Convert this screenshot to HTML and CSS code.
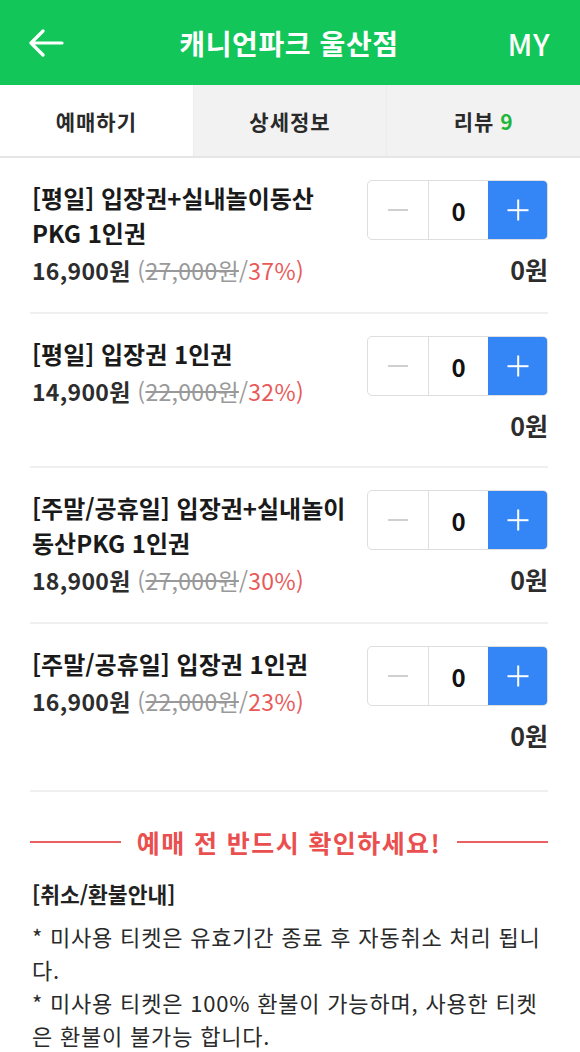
FILE: index.html
```html
<!DOCTYPE html>
<html lang="ko">
<head>
<meta charset="utf-8">
<title>캐니언파크 울산점</title>
<link rel="stylesheet" href="styles.css">
</head>
<body>
<header class="topbar">
  <span class="back" aria-label="뒤로">
    <svg width="36" height="28" viewBox="0 0 36 28"><path d="M34 14H3M15 2L3 14l12 12" fill="none" stroke="#fff" stroke-width="3.2" stroke-linecap="round" stroke-linejoin="round"/></svg>
  </span>
  <h1 class="title">캐니언파크 울산점</h1>
  <span class="my">MY</span>
</header>
<nav class="tabs">
  <div class="tab active">예매하기</div>
  <div class="tab">상세정보</div>
  <div class="tab">리뷰 <span class="count">9</span></div>
</nav>
<main>
  <ul class="items">
    <li class="item">
      <div class="info">
        <div class="name">[평일] 입장권+실내놀이동산 PKG 1인권</div>
        <div class="price"><b>16,900원</b> <span class="orig">(<s>27,000원</s>/</span><span class="rate">37%)</span></div>
      </div>
      <div class="order">
        <div class="stepper"><span class="btn minus"></span><span class="qty">0</span><span class="btn plus"></span></div>
        <div class="sum">0원</div>
      </div>
    </li>
    <li class="item">
      <div class="info">
        <div class="name">[평일] 입장권 1인권</div>
        <div class="price"><b>14,900원</b> <span class="orig">(<s>22,000원</s>/</span><span class="rate">32%)</span></div>
      </div>
      <div class="order">
        <div class="stepper"><span class="btn minus"></span><span class="qty">0</span><span class="btn plus"></span></div>
        <div class="sum">0원</div>
      </div>
    </li>
    <li class="item">
      <div class="info">
        <div class="name">[주말/공휴일] 입장권+실내놀이동산PKG 1인권</div>
        <div class="price"><b>18,900원</b> <span class="orig">(<s>27,000원</s>/</span><span class="rate">30%)</span></div>
      </div>
      <div class="order">
        <div class="stepper"><span class="btn minus"></span><span class="qty">0</span><span class="btn plus"></span></div>
        <div class="sum">0원</div>
      </div>
    </li>
    <li class="item last">
      <div class="info">
        <div class="name">[주말/공휴일] 입장권 1인권</div>
        <div class="price"><b>16,900원</b> <span class="orig">(<s>22,000원</s>/</span><span class="rate">23%)</span></div>
      </div>
      <div class="order">
        <div class="stepper"><span class="btn minus"></span><span class="qty">0</span><span class="btn plus"></span></div>
        <div class="sum">0원</div>
      </div>
    </li>
  </ul>
  <section class="notice">
    <h2 class="notice-title"><span>예매 전 반드시 확인하세요!</span></h2>
    <h3 class="notice-head">[취소/환불안내]</h3>
    <p class="notice-text">* 미사용 티켓은 유효기간 종료 후 자동취소 처리 됩니다.</p>
    <p class="notice-text">* 미사용 티켓은 100% 환불이 가능하며, 사용한 티켓은 환불이 불가능 합니다.</p>
  </section>
</main>
</body>
</html>
```
FILE: styles.css
```css
* { box-sizing: border-box; }
html, body { margin: 0; padding: 0; }
body {
  width: 580px;
  background: #fff;
  color: #222;
  font-family: "Noto Sans CJK KR", "Noto Sans", sans-serif;
}
.topbar {
  height: 85px;
  background: #12c65a;
  display: flex;
  align-items: center;
  justify-content: space-between;
  padding: 0 30px 0 28px;
  color: #fff;
}
.back { display: flex; width: 70px; }
.title {
  margin: 0;
  font-size: 28px;
  font-weight: 700;
  letter-spacing: 0.6px;
}
.my {
  width: 70px;
  text-align: right;
  font-size: 30px;
  font-weight: 500;
  letter-spacing: 0.5px;
}
.tabs {
  display: flex;
  height: 73px;
  border-bottom: 2px solid #e6e6e6;
}
.tab {
  flex: 1;
  display: flex;
  align-items: center;
  justify-content: center;
  background: #f2f2f2;
  font-size: 21px;
  font-weight: 700;
  letter-spacing: 1px;
  color: #2a2a2a;
  border-left: 1px solid #ececec;
}
.tab.active { background: #fff; border-left: none; }
.count { color: #1fb73a; margin-left: 6px; }
.items {
  list-style: none;
  margin: 0;
  padding: 0 32px 0 30px;
}
.item {
  display: flex;
  align-items: flex-start;
  gap: 16px;
  padding: 22px 0 26px 2px;
  border-bottom: 2px solid #efefef;
}
.item.last { padding-bottom: 40px; }
.info { flex: 1; min-width: 0; }
.name {
  font-size: 24px;
  font-weight: 700;
  line-height: 35px;
  color: #1a1a1a;
  letter-spacing: 0;
}
.price {
  margin-top: 4px;
  font-size: 23px;
  line-height: 32px;
  letter-spacing: 0.3px;
}
.price b { color: #2d2d2d; font-weight: 700; }
.orig { color: #999; }
.orig s { text-decoration-thickness: 1.5px; }
.rate { color: #e85a5a; }
.order {
  width: 181px;
  display: flex;
  flex-direction: column;
  align-items: flex-end;
}
.stepper {
  width: 181px;
  height: 60px;
  display: flex;
  border: 1px solid #dedede;
  border-radius: 5px;
  overflow: hidden;
}
.btn, .qty {
  flex: 1;
  position: relative;
  display: flex;
  align-items: center;
  justify-content: center;
}
.qty {
  border-left: 1px solid #dedede;
  font-size: 24px;
  font-weight: 700;
  color: #111;
}
.btn.minus::before {
  content: "";
  width: 20px;
  height: 1.5px;
  background: #d0d0d0;
}
.btn.plus { background: #3486f6; margin: -1px -1px -1px 0; }
.btn.plus::before, .btn.plus::after {
  content: "";
  position: absolute;
  background: #fff;
  left: 50%;
  top: 50%;
}
.btn.plus::before { width: 21px; height: 1.6px; transform: translate(-50%, -50%); }
.btn.plus::after { width: 1.6px; height: 21px; transform: translate(-50%, -50%); }
.sum {
  margin-top: 14px;
  font-size: 25px;
  line-height: 30px;
  font-weight: 700;
  color: #2d2d2d;
}
.notice { padding: 26px 32px 0 30px; }
.notice-title {
  margin: 0;
  display: flex;
  align-items: center;
  gap: 16px;
  color: #ea4f4f;
  font-size: 25px;
  font-weight: 700;
  letter-spacing: 1.4px;
  line-height: 48px;
}
.notice-title::before, .notice-title::after {
  content: "";
  flex: 1;
  height: 2px;
  background: #ea6060;
}
.notice-head {
  margin: 8px 0 6px 2px;
  font-size: 21.5px;
  font-weight: 700;
  line-height: 40px;
  color: #222;
}
.notice-text {
  margin: 0 0 0 2px;
  font-size: 22px;
  letter-spacing: 0.8px;
  line-height: 33px;
  color: #2a2a2a;
}
```
